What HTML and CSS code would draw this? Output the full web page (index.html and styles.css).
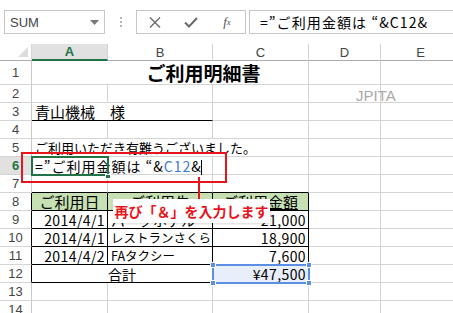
FILE: index.html
```html
<!DOCTYPE html>
<html lang="ja">
<head>
  <meta charset="UTF-8">
  <title>ご利用明細書</title>
  <link rel="stylesheet" href="styles.css">
</head>
<body>
  <div class="formula-bar">
    <div class="name-box">
      <span>SUM</span>
      <svg width="9" height="5" viewBox="0 0 9 5"><path d="M0 0h9L4.5 5z" fill="#777"/></svg>
    </div>
    <div class="grip"><i></i><i></i><i></i></div>
    <div class="fx-box">
      <span class="slot">
        <svg width="12" height="11" viewBox="0 0 12 11"><path d="M1 0.5l10 10M11 0.5l-10 10" stroke="#6a6a6a" stroke-width="1.4" fill="none"/></svg>
      </span>
      <span class="slot">
        <svg width="14" height="11" viewBox="0 0 14 11"><path d="M1 5.5l4 4L13 1" stroke="#6a6a6a" stroke-width="2" fill="none"/></svg>
      </span>
      <span class="slot fx">f<sub>x</sub></span>
    </div>
    <div class="formula">=”ご利用金額は “&amp;C12&amp;</div>
  </div>

  <div class="sheet-wrap">
    <div class="sheet">
      <div class="corner"><span class="tri"></span></div>
      <div class="ch active">A</div>
      <div class="ch">B</div>
      <div class="ch">C</div>
      <div class="ch">D</div>
      <div class="ch">E</div>

      <div class="rh">1</div>
      <div class="c span3 title">ご利用明細書</div>
      <div class="c"></div><div class="c"></div>

      <div class="rh">2</div>
      <div class="c"></div><div class="c"></div><div class="c"></div><div class="c"></div><div class="c"></div>

      <div class="rh">3</div>
      <div class="c span2 name bb">青山機械　様</div>
      <div class="c"></div><div class="c"></div><div class="c"></div>

      <div class="rh">4</div>
      <div class="c"></div><div class="c"></div><div class="c"></div><div class="c"></div><div class="c"></div>

      <div class="rh">5</div>
      <div class="c span3 thanks">ご利用いただき有難うございました。</div>
      <div class="c"></div><div class="c"></div>

      <div class="rh on">6</div>
      <div class="c span2 edit">=”ご利用金額は “&amp;<span class="ref">C12</span>&amp;</div>
      <div class="c"></div><div class="c"></div><div class="c"></div>

      <div class="rh">7</div>
      <div class="c bb"></div><div class="c bb"></div><div class="c bb"></div><div class="c"></div><div class="c"></div>

      <div class="rh tl">8</div>
      <div class="c hd bb br ctr">ご利用日</div>
      <div class="c hd bb br ctr">ご利用先</div>
      <div class="c hd bb br ctr"><u>ご利用金額</u></div>
      <div class="c"></div><div class="c"></div>

      <div class="rh tl">9</div>
      <div class="c bb br r">2014/4/1</div>
      <div class="c bb br">パークホテル</div>
      <div class="c bb br r">21,000</div>
      <div class="c"></div><div class="c"></div>

      <div class="rh tl">10</div>
      <div class="c bb br r">2014/4/1</div>
      <div class="c bb br narrow">レストランさくら</div>
      <div class="c bb br r">18,900</div>
      <div class="c"></div><div class="c"></div>

      <div class="rh tl">11</div>
      <div class="c bb br r">2014/4/2</div>
      <div class="c bb br narrow">FAタクシー</div>
      <div class="c bb br r">7,600</div>
      <div class="c"></div><div class="c"></div>

      <div class="rh tl">12</div>
      <div class="c span2 bb br ctr">合計</div>
      <div class="c bb br r sel">¥47,500</div>
      <div class="c"></div><div class="c"></div>

      <div class="rh">13</div>
      <div class="c"></div><div class="c"></div><div class="c"></div><div class="c"></div><div class="c"></div>

      <div class="rh">14</div>
      <div class="c"></div><div class="c"></div><div class="c"></div><div class="c"></div><div class="c"></div>
    </div>

    <div class="watermark">JPITA</div>
    <div class="active-cell"><span class="fill-handle"></span></div>
    <div class="caret"></div>
    <div class="red-box"></div>
    <div class="leader"></div>
    <div class="callout">再び「＆」を入力します</div>
    <div class="selection">
      <span class="h tl"></span><span class="h tr"></span><span class="h bl"></span><span class="h br"></span>
    </div>
  </div>
</body>
</html>
```

FILE: styles.css
```css
* {
  box-sizing: border-box;
}

body {
  margin: 0;
  background: #fff;
  font-family: "Noto Sans CJK JP", sans-serif;
  color: #000;
  overflow: hidden;
}

/* formula bar */
.formula-bar {
  display: flex;
  height: 24px;
  margin-top: 10px;
}

.name-box {
  margin-left: 4px;
  width: 101px;
  border: 1px solid #c6c6c6;
  display: flex;
  align-items: center;
  justify-content: space-between;
  padding: 0 5px 0 5px;
  font: 13px "Liberation Sans", sans-serif;
  color: #444;
}

.grip {
  width: 31px;
  display: flex;
  flex-direction: column;
  align-items: center;
  justify-content: center;
  gap: 2px;
}

.grip i {
  width: 2px;
  height: 2px;
  background: #b4b4b4;
}

.fx-box {
  width: 110px;
  border: 1px solid #c6c6c6;
  display: flex;
  align-items: center;
}

.slot {
  width: 36px;
  display: flex;
  justify-content: center;
  align-items: center;
}

.fx {
  font: italic 13px "Liberation Serif", serif;
  color: #555;
}

.fx sub {
  font-size: 9px;
}

.formula {
  flex: 1;
  margin-left: 3px;
  border: 1px solid #c6c6c6;
  border-right: 0;
  padding-left: 10px;
  font-size: 14px;
  letter-spacing: 1.1px;
  line-height: 22px;
  white-space: nowrap;
}

/* sheet grid */
.sheet-wrap {
  position: relative;
  margin-top: 10px;
}

.sheet {
  display: grid;
  grid-template-columns: 32px 76px 105px 96px 72px 80px;
  grid-template-rows: 17px 24px repeat(13, 18px);
}

.corner {
  border-right: 1px solid #d4d4d4;
  border-bottom: 1px solid #ababab;
  display: flex;
  justify-content: flex-end;
  align-items: flex-end;
  padding: 0 3px 3px 0;
}

.tri {
  width: 0;
  height: 0;
  border-left: 10px solid transparent;
  border-bottom: 10px solid #dcdcdc;
}

.ch {
  border-right: 1px solid #d4d4d4;
  border-bottom: 1px solid #ababab;
  display: flex;
  align-items: center;
  justify-content: center;
  font: 13px "Liberation Sans", sans-serif;
  color: #444;
}

.ch.active {
  background: #e1e1e1;
  color: #217346;
  font-weight: bold;
  border-bottom: 2px solid #217346;
}

.rh {
  border-right: 1px solid #c8c8c8;
  border-bottom: 1px solid #d4d4d4;
  display: flex;
  align-items: center;
  justify-content: center;
  font: 13px "Liberation Sans", sans-serif;
  color: #444;
}

.rh.on {
  background: #e1e1e1;
  color: #217346;
  font-weight: bold;
}

.rh.tl {
  border-right-color: #000;
}

.c {
  border-right: 1px solid #d4d4d4;
  border-bottom: 1px solid #d4d4d4;
  display: flex;
  align-items: center;
  padding: 0 3px;
  font-size: 14px;
  white-space: nowrap;
  min-width: 0;
}

.span2 {
  grid-column: span 2;
}

.span3 {
  grid-column: span 3;
}

.bb {
  border-bottom-color: #000;
}

.br {
  border-right-color: #000;
}

.r {
  justify-content: flex-end;
  padding-right: 2px;
  letter-spacing: 0.4px;
}

.ctr {
  justify-content: center;
}

.hd {
  background: #c6e0b4;
  font-size: 15px;
}

.title {
  justify-content: center;
  padding-left: 70px;
  font-size: 19px;
  font-weight: bold;
}

.name {
  font-size: 15px;
  padding-left: 3px;
}

.thanks {
  font-size: 13px;
  padding-left: 3px;
}

.edit {
  padding-left: 3px;
  letter-spacing: 1px;
}

.ref {
  color: #3f78d8;
}

.narrow {
  font-size: 12.5px;
}

.sel {
  background: #e8eefa;
}

/* overlays */
.watermark {
  position: absolute;
  left: 356px;
  top: 43px;
  font: 15px "Liberation Sans", sans-serif;
  color: #a8a8a8;
}

.active-cell {
  position: absolute;
  left: 31px;
  top: 112px;
  width: 78px;
  height: 20px;
  border: 2px solid #217346;
}

.fill-handle {
  position: absolute;
  right: -4px;
  bottom: -5px;
  width: 6px;
  height: 5px;
  background: #217346;
  border: 1px solid #fff;
}

.caret {
  position: absolute;
  left: 201px;
  top: 116px;
  width: 1px;
  height: 15px;
  background: #000;
}

.red-box {
  position: absolute;
  left: 21px;
  top: 108px;
  width: 206px;
  height: 31px;
  border: 2px solid #e8141b;
}

.leader {
  position: absolute;
  left: 198px;
  top: 133px;
  width: 2px;
  height: 23px;
  background: #e8141b;
}

.callout {
  position: absolute;
  left: 113px;
  top: 155px;
  width: 157px;
  height: 24px;
  background: #fff;
  box-shadow: 1px 1px 2px rgba(0, 0, 0, 0.15);
  display: flex;
  align-items: center;
  justify-content: center;
  color: #e8141b;
  font-size: 14px;
  font-weight: bold;
  white-space: nowrap;
}

.selection {
  position: absolute;
  left: 212px;
  top: 220px;
  width: 98px;
  height: 20px;
  border: 2px solid #5b8fe3;
}

.h {
  position: absolute;
  width: 6px;
  height: 6px;
  background: #5b8fe3;
  border: 1px solid #fff;
}

.h.tl { left: -4px; top: -4px; }
.h.tr { right: -4px; top: -4px; }
.h.bl { left: -4px; bottom: -4px; }
.h.br { right: -4px; bottom: -4px; }
```
